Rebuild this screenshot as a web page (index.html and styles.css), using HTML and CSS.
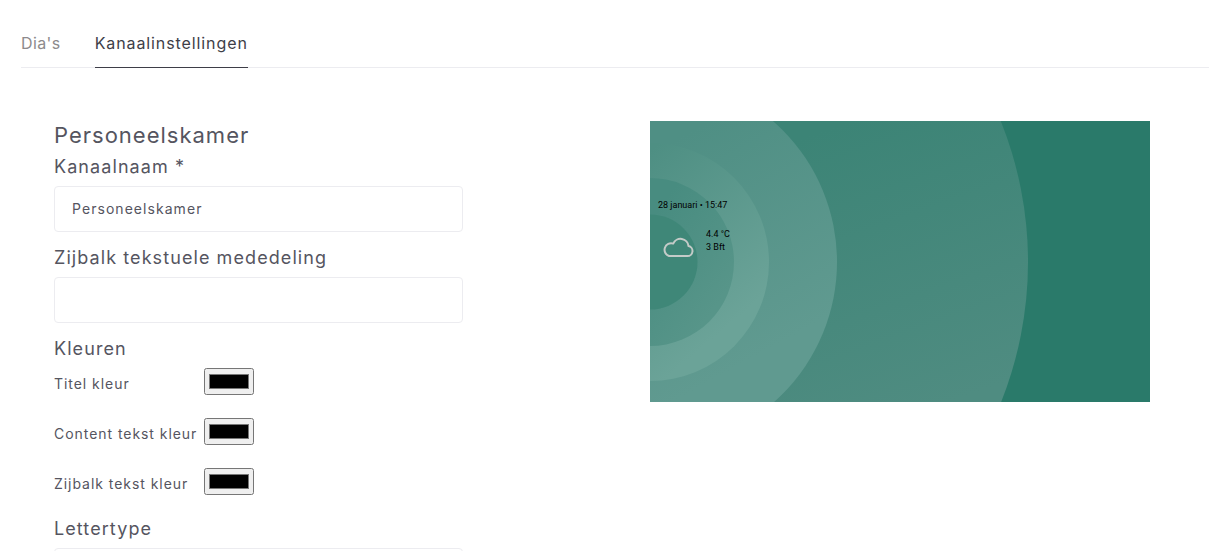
FILE: index.html
```html
<!DOCTYPE html>
<html lang="nl">
<head>
  <meta charset="UTF-8">
  <title>Kanaalinstellingen</title>
  <link rel="stylesheet" href="styles.css">
</head>
<body>

  <nav class="tabs">
    <a class="tab" href="#">Dia's</a>
    <a class="tab active" href="#">Kanaalinstellingen</a>
  </nav>

  <div class="content">
    <form class="settings">
      <h2 class="channel-name">Personeelskamer</h2>

      <label class="field-label" for="name">Kanaalnaam *</label>
      <input class="text-input" id="name" type="text" value="Personeelskamer">

      <label class="field-label notice-label" for="notice">Zijbalk tekstuele mededeling</label>
      <input class="text-input" id="notice" type="text">

      <h3 class="field-label colors-label">Kleuren</h3>
      <div class="color-row">
        <label for="c1">Titel kleur</label>
        <input class="color-input" id="c1" type="color" value="#000000">
      </div>
      <div class="color-row">
        <label for="c2">Content tekst kleur</label>
        <input class="color-input" id="c2" type="color" value="#000000">
      </div>
      <div class="color-row">
        <label for="c3">Zijbalk tekst kleur</label>
        <input class="color-input" id="c3" type="color" value="#000000">
      </div>

      <label class="field-label font-label" for="font">Lettertype</label>
      <input class="text-input" id="font" type="text">
    </form>

    <div class="preview">
      <svg class="rings" viewBox="0 0 500 281" width="500" height="281">
        <defs>
          <linearGradient id="ring5" gradientUnits="userSpaceOnUse" x1="200" y1="0" x2="300" y2="281">
            <stop offset="0" stop-color="#3c8476"/>
            <stop offset="1" stop-color="#4f8c81"/>
          </linearGradient>
          <linearGradient id="ring4" gradientUnits="userSpaceOnUse" x1="60" y1="0" x2="170" y2="200">
            <stop offset="0" stop-color="#4f8f84"/>
            <stop offset="1" stop-color="#609a90"/>
          </linearGradient>
          <linearGradient id="ring3" gradientUnits="userSpaceOnUse" x1="0" y1="30" x2="119" y2="170">
            <stop offset="0" stop-color="#4e8f83"/>
            <stop offset="1" stop-color="#6ba398"/>
          </linearGradient>
          <linearGradient id="ring2" gradientUnits="userSpaceOnUse" x1="0" y1="100" x2="84" y2="160">
            <stop offset="0" stop-color="#488c80"/>
            <stop offset="1" stop-color="#579589"/>
          </linearGradient>
        </defs>
        <circle cx="0" cy="141" r="378" fill="url(#ring5)"/>
        <circle cx="0" cy="141" r="187" fill="url(#ring4)"/>
        <circle cx="0" cy="141" r="119" fill="url(#ring3)"/>
        <circle cx="0" cy="141" r="84" fill="url(#ring2)"/>
        <circle cx="0" cy="141" r="47.5" fill="#3f8778"/>
      </svg>
      <div class="preview-side">
        <div class="preview-date">28 januari • 15:47</div>
        <div class="preview-weather">
          <svg class="cloud" viewBox="0 0 32 22" width="32" height="22">
            <path d="M7 20H25.500A5 5 0 0 0 26.500 10.100A8 8 0 0 0 11.200 7.600A6.300 6.300 0 0 0 7 20Z" fill="none" stroke="#c4cbc8" stroke-width="2" stroke-linejoin="round"/>
          </svg>
          <div class="preview-temp">
            <div>4.4 °C</div>
            <div>3 Bft</div>
          </div>
        </div>
      </div>
    </div>
  </div>

</body>
</html>
```

FILE: styles.css
```css
html, body {
  height: 100%;
  overflow: hidden;
}

body {
  font-family: 'Inter', 'Open Sans', sans-serif;
  margin: 0;
  background-color: #fff;
  color: #55555f;
}

.tabs {
  display: flex;
  gap: 34px;
  margin: 21px 0 0 21px;
  height: 46px;
  border-bottom: 1px solid #ececf0;
}

.tab {
  font-size: 16px;
  line-height: 44px;
  height: 47px;
  box-sizing: border-box;
  letter-spacing: 0.4px;
  color: #8d8a8c;
  text-decoration: none;
}

.tab.active {
  color: #3e3e48;
  letter-spacing: 0.9px;
  border-bottom: 1px solid #3e3e48;
}

.content {
  display: flex;
  padding: 53px 0 0 54px;
}

.settings {
  display: flex;
  flex-direction: column;
  align-items: flex-start;
  width: 409px;
}

.channel-name {
  font-size: 22px;
  font-weight: 400;
  line-height: 28px;
  letter-spacing: 1px;
  margin: 0;
}

.field-label {
  display: block;
  font-size: 18px;
  font-weight: 400;
  line-height: 24px;
  letter-spacing: 1.08px;
  margin: 0 0 7px;
}

.channel-name + .field-label {
  margin-top: 6px;
}

.notice-label {
  margin-top: 14px;
}

.colors-label {
  margin-top: 14px;
}

.font-label {
  margin-top: 22px;
}

.text-input {
  box-sizing: border-box;
  width: 409px;
  height: 46px;
  flex: none;
  padding: 0 17px 2px;
  border: 1px solid #ececf0;
  border-radius: 4px;
  font-family: inherit;
  font-size: 14px;
  letter-spacing: 1.05px;
  color: #55555f;
}

.color-row {
  display: flex;
  align-items: center;
  width: 100%;
  height: 27px;
  font-size: 14px;
  letter-spacing: 0.95px;
}

.color-row + .color-row {
  margin-top: 23px;
}

.color-row label {
  width: 150px;
  margin-top: 4px;
}

.color-input {
  width: 50px;
  height: 27px;
  padding: 1px 2px;
  margin: 0;
  box-sizing: border-box;
}

.preview {
  position: relative;
  width: 500px;
  height: 281px;
  margin-left: 187px;
  overflow: hidden;
  background-color: #2a7a6a;
}

.rings {
  position: absolute;
  left: 0;
  top: 0;
}

.preview-side {
  position: relative;
  padding: 78px 0 0 8px;
  font-family: 'Roboto', sans-serif;
  font-size: 9px;
  line-height: 13px;
  color: #000;
}

.preview-weather {
  display: flex;
  margin-top: 16px;
}

.cloud {
  margin: 8px 0 0 4px;
}

.preview-temp {
  margin-left: 12px;
}
```
